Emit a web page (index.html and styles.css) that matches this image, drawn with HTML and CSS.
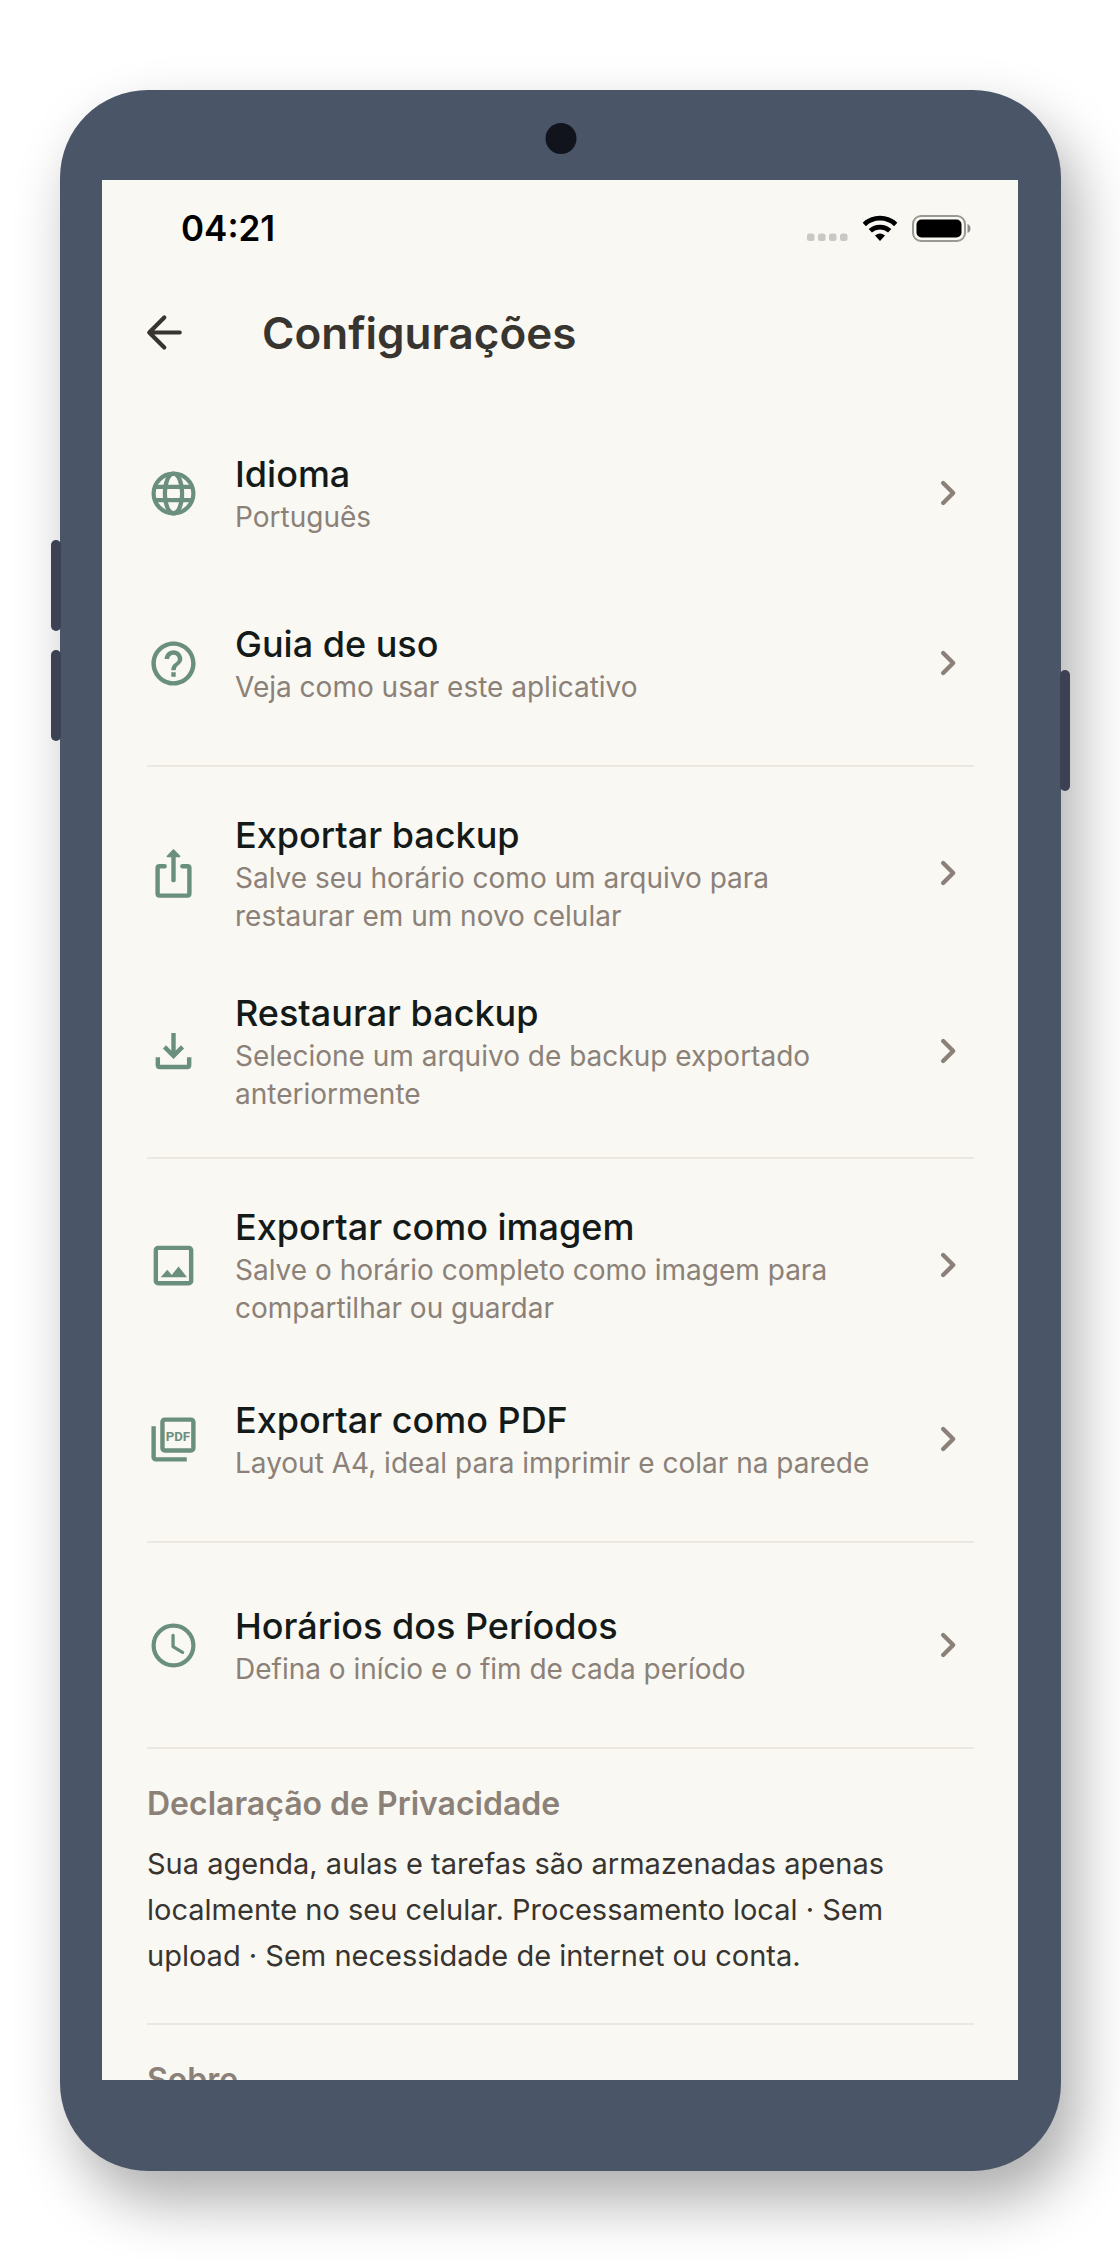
FILE: index.html
```html
<!DOCTYPE html>
<html lang="pt-BR">
<head>
  <meta charset="UTF-8">
  <title>Configurações</title>
  <meta name="viewport" content="width=device-width, initial-scale=1.0">
  <link rel="stylesheet" href="styles.css">
</head>
<body>

  <!-- shared chevron -->
  <svg class="sprite" aria-hidden="true">
    <symbol id="chevron" viewBox="0 0 24 24">
      <path d="M9.2 7.2l4.8 4.8-4.8 4.8" fill="none" stroke="currentColor" stroke-width="2.1" stroke-linecap="round" stroke-linejoin="round"/>
    </symbol>
  </svg>

  <div class="phone">
    <span class="side-button volume-up"></span>
    <span class="side-button volume-down"></span>
    <span class="side-button power"></span>
    <span class="camera"></span>

    <div class="screen">
      <!-- Status bar -->
      <div class="status-bar">
        <span class="time">04:21</span>
        <div class="status-icons">
          <svg width="41" height="27" viewBox="0 0 41 27" fill="#c9c8c4">
            <rect x="0" y="18.5" width="7.500" height="7.500" rx="2.500"/>
            <rect x="11" y="18.5" width="7.500" height="7.500" rx="2.500"/>
            <rect x="22" y="18.5" width="7.500" height="7.500" rx="2.500"/>
            <rect x="33" y="18.5" width="7.500" height="7.500" rx="2.500"/>
          </svg>
          <svg width="36" height="27" viewBox="0 0 36 27">
            <path d="M2.3 9.400a23 23 0 0 1 31.400 0" fill="none" stroke="#000" stroke-width="4.800"/>
            <path d="M8.300 15.800a14.500 14.500 0 0 1 19.400 0" fill="none" stroke="#000" stroke-width="4.800"/>
            <path d="M13 20.400a8 8 0 0 1 10 0L18 26z"/>
          </svg>
          <svg width="59" height="27" viewBox="0 0 59 27">
            <rect x="1" y="1" width="52" height="25" rx="8" fill="none" stroke="#9a9995" stroke-width="2"/>
            <rect x="4.500" y="4.500" width="45" height="18" rx="5"/>
            <path d="M55.500 9c4 1.600 4 7.400 0 9z" fill="#8b8a86"/>
          </svg>
        </div>
      </div>

      <header class="app-bar">
        <button class="back-button" type="button" aria-label="Voltar">
          <svg class="icon" viewBox="0 0 24 24" fill="none" stroke="currentColor" stroke-width="1.900" stroke-linecap="round" stroke-linejoin="round">
            <path d="M18.900 12H5.200M11.900 5.200L5.100 12l6.800 6.800"/>
          </svg>
        </button>
        <h1>Configurações</h1>
      </header>

      <main class="content">
        <section class="group">
          <button class="row" type="button">
            <svg class="icon" viewBox="0 0 24 24" fill="none" stroke="currentColor" stroke-width="1.900">
              <circle cx="12" cy="12" r="9"/>
              <ellipse cx="12" cy="12" rx="3.900" ry="9"/>
              <path d="M3.500 9h17M3.500 15h17"/>
            </svg>
            <span class="text">
              <span class="title">Idioma</span>
              <span class="subtitle">Português</span>
            </span>
            <svg class="chevron"><use href="#chevron"/></svg>
          </button>
          <button class="row" type="button">
            <svg class="icon" viewBox="0 0 24 24" fill="currentColor">
              <path d="M11 18h2v-2h-2v2zm1-16C6.480 2 2 6.480 2 12s4.480 10 10 10 10-4.480 10-10S17.520 2 12 2zm0 18c-4.410 0-8-3.590-8-8s3.590-8 8-8 8 3.590 8 8-3.590 8-8 8zm0-14c-2.210 0-4 1.790-4 4h2c0-1.100.9-2 2-2s2 .9 2 2c0 2-3 1.750-3 5h2c0-2.250 3-2.500 3-5 0-2.210-1.790-4-4-4z"/>
            </svg>
            <span class="text">
              <span class="title">Guia de uso</span>
              <span class="subtitle">Veja como usar este aplicativo</span>
            </span>
            <svg class="chevron"><use href="#chevron"/></svg>
          </button>
        </section>

        <hr>

        <section class="group">
          <button class="row tall" type="button">
            <svg class="icon" viewBox="0 0 24 24" fill="none" stroke="currentColor" stroke-width="2" stroke-linecap="round" stroke-linejoin="round">
              <path d="M8 8.700H5.700q-.9 0-.9.900v11.500q0 .9.900.9h12.600q.9 0 .9-.9V9.600q0-.9-.9-.9H16"/>
              <path d="M12 3.500v11.500"/>
              <path d="M12 1.400l2.700 2.800H9.300z" fill="currentColor" stroke-width=".8"/>
            </svg>
            <span class="text">
              <span class="title">Exportar backup</span>
              <span class="subtitle">Salve seu horário como um arquivo para restaurar em um novo celular</span>
            </span>
            <svg class="chevron"><use href="#chevron"/></svg>
          </button>
          <button class="row tall" type="button">
            <svg class="icon" viewBox="0 0 24 24" fill="none" stroke="currentColor" stroke-width="2">
              <path d="M12 3.600v10.400M7.900 9.900l4.100 4.100 4.100-4.100"/>
              <path d="M4.900 14.600v3.500q0 .9.900.9h12.400q.9 0 .9-.9V14.600"/>
            </svg>
            <span class="text">
              <span class="title">Restaurar backup</span>
              <span class="subtitle">Selecione um arquivo de backup exportado anteriormente</span>
            </span>
            <svg class="chevron"><use href="#chevron"/></svg>
          </button>
        </section>

        <hr>

        <section class="group">
          <button class="row tall" type="button">
            <svg class="icon" viewBox="0 0 24 24" fill="currentColor">
              <path d="M19 5v14H5V5h14m0-2H5c-1.100 0-2 .9-2 2v14c0 1.100.9 2 2 2h14c1.100 0 2-.9 2-2V5c0-1.100-.9-2-2-2z"/>
              <path d="M14.300 12.400l-3.100 3.900-2-2.400L6.200 17.300h11.900z"/>
            </svg>
            <span class="text">
              <span class="title">Exportar como imagem</span>
              <span class="subtitle">Salve o horário completo como imagem para compartilhar ou guardar</span>
            </span>
            <svg class="chevron"><use href="#chevron"/></svg>
          </button>
          <button class="row" type="button">
            <svg class="icon" viewBox="0 0 24 24" fill="currentColor">
              <path d="M20 2H8c-1.100 0-2 .9-2 2v12c0 1.100.9 2 2 2h12c1.100 0 2-.9 2-2V4c0-1.100-.9-2-2-2zm0 14H8V4h12v12zM4 6H2v14c0 1.100.9 2 2 2h14v-2H4V6z"/>
              <text class="pdf-label" x="14" y="12.600" text-anchor="middle">PDF</text>
            </svg>
            <span class="text">
              <span class="title">Exportar como PDF</span>
              <span class="subtitle">Layout A4, ideal para imprimir e colar na parede</span>
            </span>
            <svg class="chevron"><use href="#chevron"/></svg>
          </button>
        </section>

        <hr>

        <section class="group">
          <button class="row" type="button">
            <svg class="icon" viewBox="0 0 24 24" fill="none" stroke="currentColor" stroke-linecap="round" stroke-linejoin="round">
              <circle cx="12" cy="12" r="9" stroke-width="1.900"/>
              <path d="M11.800 7.400v5.100l4.300 2.600" stroke-width="1.500"/>
            </svg>
            <span class="text">
              <span class="title">Horários dos Períodos</span>
              <span class="subtitle">Defina o início e o fim de cada período</span>
            </span>
            <svg class="chevron"><use href="#chevron"/></svg>
          </button>
        </section>

        <hr>

        <section class="info">
          <h2>Declaração de Privacidade</h2>
          <p>Sua agenda, aulas e tarefas são armazenadas apenas localmente no seu celular. Processamento local · Sem upload · Sem necessidade de internet ou conta.</p>
        </section>

        <hr>

        <section class="info">
          <h2>Sobre</h2>
        </section>
      </main>
    </div>
  </div>

</body>
</html>
```
FILE: styles.css
```css
* {
  box-sizing: border-box;
}

body {
  margin: 0;
  padding: 90px 59px 90px 60px;
  background: #fff;
  font-family: Inter, 'Liberation Sans', sans-serif;
  color: #38342f;
}

.sprite {
  display: none;
}

/* Phone frame */
.phone {
  position: relative;
  max-width: 1001px;
  margin: 0 auto;
  padding: 90px 43px 91px 42px;
  background: #4a5568;
  border-radius: 88px;
  box-shadow: 15px 30px 60px rgba(0, 0, 0, 0.33);
}

.camera {
  position: absolute;
  top: 33px;
  left: 50%;
  width: 31px;
  height: 31px;
  transform: translateX(-50%);
  background: #11141c;
  border-radius: 50%;
}

.side-button {
  position: absolute;
  width: 10px;
  height: 91px;
  background: #3c4254;
  border-radius: 5px;
}

.volume-up {
  top: 450px;
  left: -9px;
}

.volume-down {
  top: 560px;
  left: -9px;
}

.power {
  top: 580px;
  right: -9px;
  height: 121px;
}

.screen {
  aspect-ratio: 916 / 1900;
  overflow: hidden;
  background: #f9f8f3;
}

/* Status bar */
.status-bar {
  display: flex;
  align-items: center;
  justify-content: space-between;
  height: 96px;
  padding: 0 47px 0 79px;
}

.time {
  font-size: 35px;
  font-weight: 600;
  color: #000;
}

.status-icons {
  display: flex;
  align-items: center;
  gap: 14px;
}

/* App bar */
.app-bar {
  display: flex;
  align-items: center;
  gap: 71px;
  height: 113px;
  padding: 0 36px;
}

.back-button {
  display: flex;
  padding: 0;
  border: none;
  background: none;
  color: #38342f;
  cursor: pointer;
}

h1 {
  margin: 0;
  font-size: 44px;
  font-weight: 600;
}

.icon {
  width: 53px;
  height: 53px;
  flex-shrink: 0;
}

/* Settings list */
.content {
  padding: 19px 44px 19px 45px;
}

.row {
  display: flex;
  align-items: center;
  width: 100%;
  min-height: 170px;
  padding: 0;
  border: none;
  background: none;
  font-family: inherit;
  text-align: left;
  color: #6b8f7e;
  cursor: pointer;
}

.row.tall {
  min-height: 178px;
}

.text {
  flex: 1;
  padding: 2px 36px 0 35px;
}

.title,
.subtitle {
  display: block;
}

.title {
  margin-bottom: 2px;
  font-size: 36px;
  font-weight: 500;
  line-height: 44px;
  color: #141a18;
}

.subtitle {
  font-size: 28px;
  line-height: 38px;
  color: #8b8178;
}

.chevron {
  width: 50px;
  height: 50px;
  flex-shrink: 0;
  color: #8b8178;
}

.pdf-label {
  font-family: Roboto, sans-serif;
  font-size: 6px;
  font-weight: 700;
}

hr {
  height: 2px;
  margin: 17px 0;
  border: none;
  background: #ede8df;
}

/* Text sections */
.info {
  padding: 20px 0 0;
}

.info h2 {
  margin: 0 0 19px;
  font-size: 32px;
  font-weight: 600;
  line-height: 36px;
  color: #8b8178;
}

.info p {
  margin: 0 0 44px;
  font-size: 29px;
  line-height: 46px;
}
```
